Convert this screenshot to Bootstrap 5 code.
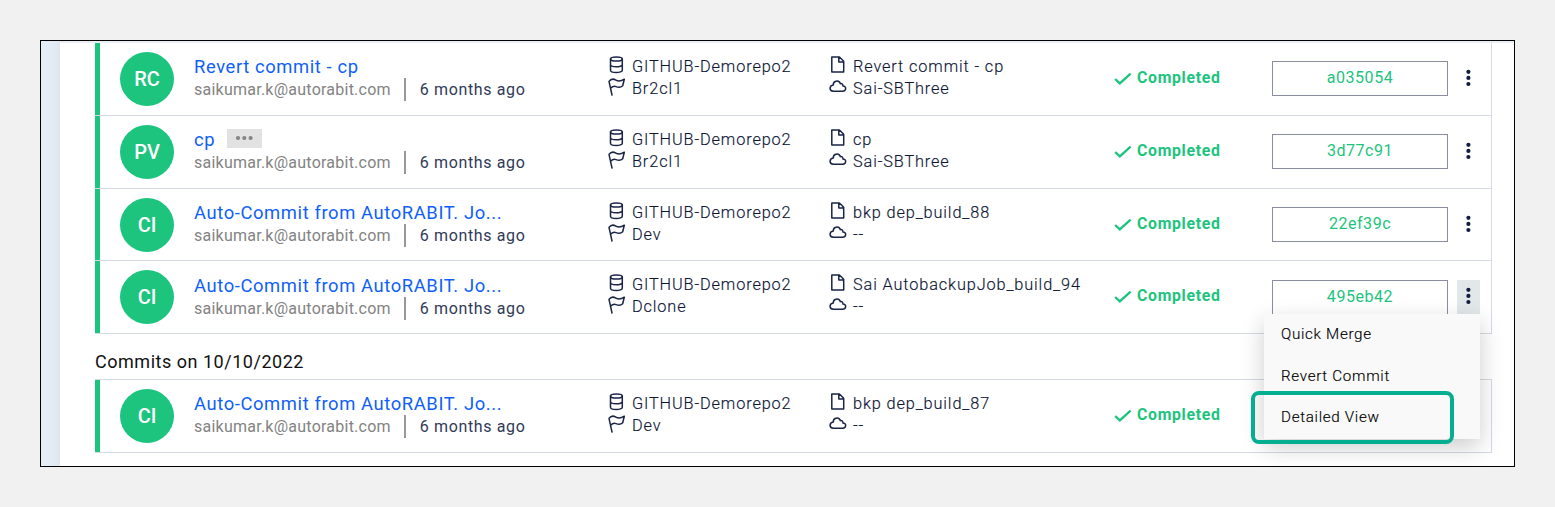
<!DOCTYPE html>
<html lang="en">
<head>
<meta charset="utf-8">
<title>Commits</title>
<link href="https://cdn.jsdelivr.net/npm/bootstrap@5.3.0/dist/css/bootstrap.min.css" rel="stylesheet">
<style>
body{background:#f1f1f1;font-family:Roboto,"Open Sans",sans-serif;color:#16213e;width:1555px;height:507px;overflow:hidden}
.frame{margin:40px 0 0 40px;width:1475px;height:427px;border:1px solid #000;background:#fff}
.side-strip{width:19px;background:linear-gradient(90deg,#e6eef6,#e3ebf4 60%,#dfe6f0)}
.main-area{border-top:2px solid #e9edf6;padding-left:35px}
.commit-list{width:1397px;border-right:1px solid #d6d9e2}
.commit-row{display:grid;grid-template-columns:94px 414px 221px 286px 157px 176px 32px;height:73px;border-bottom:1px solid #d5dae2;position:relative;background:linear-gradient(#1cc47e,#1cc47e) 0 0/5px 100% no-repeat;padding-left:5px}
.commit-row.short-row{height:72px}
.avatar-dot{width:54px;height:54px;margin:9px 0 0 20px;background:#1cc47e;color:#fff;font-size:20px;font-weight:500}
.commit-list.second{border-top:1px solid #d5dae2;background:linear-gradient(#1cc47e,#1cc47e) 0 0/5px 100% no-repeat}
.title-line{margin-top:12px;height:23px;line-height:23px;font-size:18.4px;letter-spacing:.6px;color:#0f5ffb}
.menu-row .title-line{margin-top:13px}
.who{height:23px;line-height:23px;font-size:16px;color:#838383;letter-spacing:.24px}
.who .ago{color:#303a58;border-left:2px solid #98989a;margin-left:13px;padding-left:14px;letter-spacing:.63px}
.more-chip{width:35px;height:19px;background:#e2e2e2;margin-left:12px;margin-top:-3px}
.meta-col{margin-top:12px;font-size:16.3px;font-weight:300;letter-spacing:.88px;color:#0c1636;-webkit-text-stroke:.15px #0c1636}
.meta-line{height:22px;line-height:23px}
.meta-line svg{width:18px;height:18px;margin:1px 6px 0 0;flex:none;fill:none;stroke:#1a2546;stroke-width:1.5;stroke-linejoin:round;stroke-linecap:round}
.state{height:24px;margin-top:23px;font-size:15.8px;font-weight:700;color:#1cc47e;letter-spacing:.7px}
.state svg{margin:2px 5px 0 -1px}
.hash-btn,.hash-btn:hover{height:35px;margin-top:18px;border:1px solid #8a8d9c;border-radius:0;padding:0;line-height:29px;font-size:16px;letter-spacing:.55px;color:#1cc47e;background:#fff}
.menu-row .hash-btn{margin-top:19px;line-height:27px}
.hash-btn span{position:relative;top:-1px}
.kebab{width:23px;height:34px;margin:19px 0 0 9px;padding:0;border:0;border-radius:0;background:none}
.kebab.open{background:#e2e7ea}
.kebab svg{display:block;fill:#131d3d}
.day-head{height:45px;line-height:55px;font-size:18px;letter-spacing:.52px;color:#111}
.commit-menu{display:block;position:absolute;left:1169px;top:53px;width:216px;height:125px;min-width:0;padding:0;border:0;border-radius:0;background:#f9f9f9;box-shadow:0 8px 22px rgba(0,0,0,.2);z-index:5}
.commit-menu .dropdown-item{height:41.6px;line-height:40px;padding:0 0 0 17px;font-size:15.2px;font-weight:300;letter-spacing:.68px;color:#000;-webkit-text-stroke:.15px #000}
.focus-box{position:absolute;left:-13px;top:77px;width:203px;height:53px;border:4px solid #06ae91;border-radius:8px}
</style>
</head>
<body>
<svg class="d-none">
<symbol id="db" viewBox="0 0 18 18"><ellipse cx="8.4" cy="3" rx="5.9" ry="2.1"/><path d="M2.5 3V14.2C2.5 17.2 14.3 17.2 14.3 14.2V3M2.5 8.6C2.5 11.6 14.3 11.6 14.3 8.6"/></symbol>
<symbol id="flag" viewBox="0 0 18 18"><path d="M4 17 1 3.4C3.3.3 5.6.7 7.9 2.1S12.9 3.4 16.3 1.2L14.7 7.8C12.2 10.2 10.3 9.6 8 8.6S4.6 8.2 2.8 10"/></symbol>
<symbol id="file" viewBox="0 0 18 18"><path d="M2.8 .9H10.4L14.7 5.3V16.1H2.8ZM9.8 1.1V5.9H14.5"/></symbol>
<symbol id="cloud" viewBox="0 0 18 18"><path d="M4.3 13.2H13.5C17.8 13 17.5 7.8 13.9 7.9 14.1 5.8 12.4 5.1 11.3 5.6 9.8 1.3 3.9 2.9 4.3 7 .1 7.6-.1 13 4.3 13.2Z"/></symbol>
<symbol id="tick" viewBox="0 0 18 14"><path d="M1.2 7 5.8 11.4 16.6 1.7" fill="none" stroke="#1cc47e" stroke-width="2.3"/></symbol>
<symbol id="dots" viewBox="0 0 23 34"><circle cx="11.4" cy="9.8" r="2.1"/><circle cx="11.4" cy="15.9" r="2.1"/><circle cx="11.4" cy="22" r="2.1"/></symbol>
</svg>
<div class="frame d-flex">
<div class="side-strip"></div>
<main class="main-area flex-grow-1">
<div class="commit-list" id="first"></div>
<div class="day-head">Commits on 10/10/2022</div>
<div class="commit-list second" id="second"></div>
</main>
</div>
<script src="https://cdn.jsdelivr.net/npm/bootstrap@5.3.0/dist/js/bootstrap.bundle.min.js"></script>
<script>
const auto='Auto-Commit from AutoRABIT. Jo...';
const chip='<span class="more-chip d-inline-flex align-items-center justify-content-center"><svg width="19" height="6" fill="#858585"><circle cx="3" cy="3" r="2.1"/><circle cx="9.3" cy="3" r="2.1"/><circle cx="15.6" cy="3" r="2.1"/></svg></span>';
const menu='<div class="dropdown-menu commit-menu"><a class="dropdown-item">Quick Merge</a><a class="dropdown-item">Revert Commit</a><a class="dropdown-item">Detailed View</a><div class="focus-box"></div></div>';
const icon=n=>`<svg><use href="#${n}"/></svg>`;
const row=(av,title,branch,file,org,hash,o={})=>`<div class="commit-row ${o.short?'short-row':''} ${o.menu?'menu-row':''}">
<div class="avatar-dot rounded-circle d-flex align-items-center justify-content-center">${av}</div>
<div><div class="title-line d-flex align-items-center"><span>${title}</span>${o.chip?chip:''}</div><div class="who d-flex"><span>saikumar.k@autorabit.com</span><span class="ago">6 months ago</span></div></div>
<div class="meta-col"><div class="meta-line d-flex">${icon('db')}<span>GITHUB-Demorepo2</span></div><div class="meta-line d-flex">${icon('flag')}<span>${branch}</span></div></div>
<div class="meta-col"><div class="meta-line d-flex">${icon('file')}<span>${file}</span></div><div class="meta-line d-flex">${icon('cloud')}<span>${org}</span></div></div>
<div class="state d-flex align-items-center"><svg width="18" height="14"><use href="#tick"/></svg><span>Completed</span></div>
<button class="btn hash-btn"><span>${hash}</span></button>
<button class="btn kebab ${o.menu?'open':''}"><svg width="23" height="34"><use href="#dots"/></svg></button>${o.menu?menu:''}</div>`;
document.getElementById('first').innerHTML=
row('RC','Revert commit - cp','Br2cl1','Revert commit - cp','Sai-SBThree','a035054')+
row('PV','cp','Br2cl1','cp','Sai-SBThree','3d77c91',{chip:1})+
row('CI',auto,'Dev','bkp dep_build_88','--','22ef39c',{short:1})+
row('CI',auto,'Dclone','Sai AutobackupJob_build_94','--','495eb42',{menu:1});
document.getElementById('second').innerHTML=row('CI',auto,'Dev','bkp dep_build_87','--','');
</script>
</body>
</html>
